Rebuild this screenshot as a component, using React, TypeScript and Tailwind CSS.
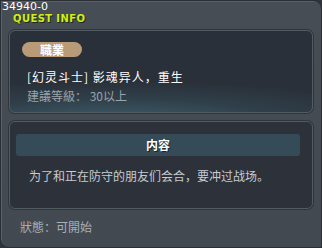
const cjk = { fontFamily: '"Noto Sans CJK SC", "Noto Sans CJK TC", sans-serif' }

export default function App() {
  return (
    <div className="w-[322px] h-[248px] bg-[#2f343b]">
      <div className="relative w-[322px] h-[248px] rounded-tr-[9px] rounded-bl-[9px] border border-[#2a2f35] bg-gradient-to-b from-[#464d55] to-[#434950] shadow-[inset_1px_1px_0_#5a6169]">
        <div className="h-[29px] pl-[1px]" style={{ fontFamily: '"DejaVu Sans", sans-serif' }}>
          <div className="text-[11px] leading-[11px] text-white">34940-0</div>
          <div
            className="mt-[1px] ml-[11px] text-[10px] leading-[11px] font-bold text-[#d2ee12] tracking-[0.4px]"
            style={{ textShadow: '1px 1px 0 #1e2a10' }}
          >
            QUEST INFO
          </div>
        </div>

        <div className="mx-[8px] h-[83px] rounded-[6px] border border-[#525a62] bg-[radial-gradient(ellipse_120%_60%_at_35%_110%,#3e5d68_0%,#2f3f4a_45%,#2a3039_80%)] shadow-[0_0_0_1px_#30353c] px-[12px] pt-[11px]" style={cjk}>
          <div className="flex items-center justify-center w-[60px] h-[15px] rounded-full bg-[#b99b78] text-[12px] font-bold text-white leading-none">
            職業
          </div>
          <div className="mt-[12px] ml-[5px] text-[12px] leading-[16px] text-white tracking-[1px]">[幻灵斗士] 影魂异人，重生</div>
          <div className="mt-[3px] ml-[5px] text-[12px] leading-[16px] text-[#9aa4ac]">建議等級： 30以上</div>
        </div>

        <div className="mt-[8px] mx-[8px] h-[88px] rounded-[6px] border border-[#525a62] bg-[#2d323a] shadow-[0_0_0_1px_#30353c] pt-[12px] pl-[6px] pr-[12px]" style={cjk}>
          <div className="flex items-center justify-center h-[22px] rounded-[3px] bg-[#354c58] text-[12px] font-bold text-white" style={{ textShadow: '1px 1px 0 #1a2228' }}>
            内容
          </div>
          <div className="mt-[12px] ml-[13px] text-[12px] leading-[16px] text-[#c6ccd1]">
            为了和正在防守的朋友们会合，要冲过战场。
          </div>
        </div>

        <div className="mt-[10px] ml-[19px] text-[12px] leading-[16px] text-[#a9b0b6]" style={cjk}>
          狀態：可開始
        </div>
      </div>
    </div>
  )
}
